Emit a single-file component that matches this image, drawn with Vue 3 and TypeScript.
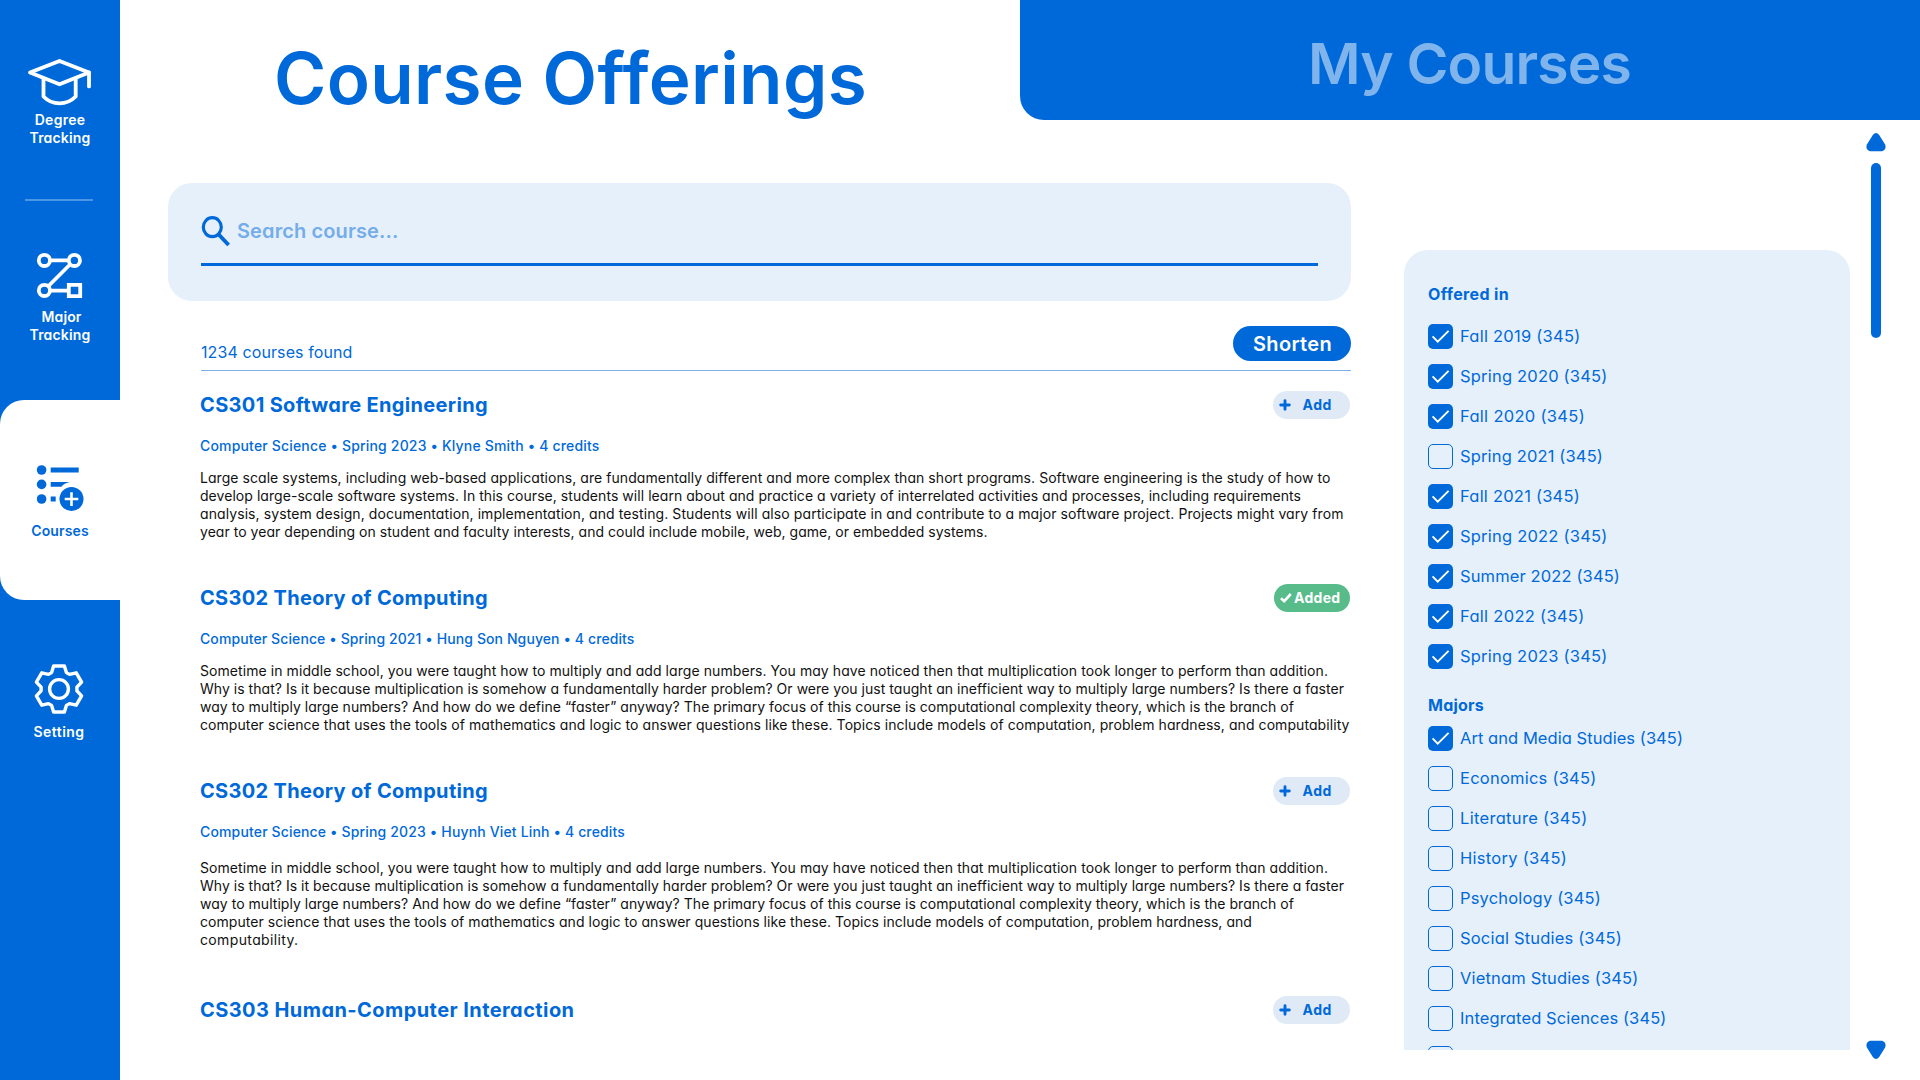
<script setup lang="ts">
import type { Directive } from 'vue'

interface TextLine {
  text: string
  width: number
}

interface Course {
  title: TextLine
  added: boolean
  loose?: boolean
  meta?: TextLine
  lines: TextLine[]
}

interface Option {
  label: string
  width: number
  checked: boolean
}

/* Tracks a single line of text out (or in) so that it spans a given width. */
const vFit: Directive<HTMLElement, number> = {
  mounted(el, { value }) {
    const count = (el.textContent ?? '').trim().length
    const natural = el.getBoundingClientRect().width
    el.style.letterSpacing = `${((value - natural) / count).toFixed(4)}px`
  },
}

const t = (text: string, width: number): TextLine => ({ text, width })

const theoryLines: TextLine[] = [
  t('Sometime in middle school, you were taught how to multiply and add large numbers. You may have noticed then that multiplication took longer to perform than addition.', 1128),
  t('Why is that? Is it because multiplication is somehow a fundamentally harder problem? Or were you just taught an inefficient way to multiply large numbers? Is there a faster', 1144),
  t('way to multiply large numbers? And how do we define “faster” anyway? The primary focus of this course is computational complexity theory, which is the branch of', 1094),
]

const courses: Course[] = [
  {
    title: t('CS301 Software Engineering', 288),
    added: false,
    meta: t('Computer Science • Spring 2023 • Klyne Smith • 4 credits', 399.5),
    lines: [
      t('Large scale systems, including web-based applications, are fundamentally different and more complex than short programs. Software engineering is the study of how to', 1130.5),
      t('develop large-scale software systems. In this course, students will learn about and practice a variety of interrelated activities and processes, including requirements', 1101),
      t('analysis, system design, documentation, implementation, and testing. Students will also participate in and contribute to a major software project. Projects might vary from', 1143.5),
      t('year to year depending on student and faculty interests, and could include mobile, web, game, or embedded systems.', 787.5),
    ],
  },
  {
    title: t('CS302 Theory of Computing', 288),
    added: true,
    meta: t('Computer Science • Spring 2021 • Hung Son Nguyen • 4 credits', 434.5),
    lines: [
      ...theoryLines,
      t('computer science that uses the tools of mathematics and logic to answer questions like these. Topics include models of computation, problem hardness, and computability', 1149.5),
    ],
  },
  {
    title: t('CS302 Theory of Computing', 288),
    added: false,
    loose: true,
    meta: t('Computer Science • Spring 2023 • Huynh Viet Linh • 4 credits', 425),
    lines: [
      ...theoryLines,
      t('computer science that uses the tools of mathematics and logic to answer questions like these. Topics include models of computation, problem hardness, and', 1052),
      t('computability.', 98.5),
    ],
  },
  { title: t('CS303 Human-Computer Interaction', 374.5), added: false, lines: [] },
]

const o = (label: string, width: number, checked: boolean): Option => ({ label, width, checked })

const terms: Option[] = [
  o('Fall 2019 (345)', 120.5, true),
  o('Spring 2020 (345)', 147.5, true),
  o('Fall 2020 (345)', 125, true),
  o('Spring 2021 (345)', 143, false),
  o('Fall 2021 (345)', 120, true),
  o('Spring 2022 (345)', 147.5, true),
  o('Summer 2022 (345)', 160, true),
  o('Fall 2022 (345)', 124.5, true),
  o('Spring 2023 (345)', 147.5, true),
]

const majors: Option[] = [
  o('Art and Media Studies (345)', 223, true),
  o('Economics (345)', 136.5, false),
  o('Literature (345)', 127.5, false),
  o('History (345)', 107, false),
  o('Psychology (345)', 141, false),
  o('Social Studies (345)', 162, false),
  o('Vietnam Studies (345)', 178.5, false),
  o('Integrated Sciences (345)', 206.5, false),
  o('', 0, false),
]

const groups = [
  { name: t('Offered in', 81), options: terms },
  { name: t('Majors', 56), options: majors },
]

/* One gear tooth, repeated every 60 degrees around the centre. */
const tooth: [number, number][] = [[-7.4, -16.4], [-5.4, -23], [5.4, -23], [7.4, -16.4]]
const gear = Array.from({ length: 6 }, (_, i) => {
  const a = (i * Math.PI) / 3
  return tooth
    .map(([x, y]) => `${(x * Math.cos(a) - y * Math.sin(a)).toFixed(2)},${(x * Math.sin(a) + y * Math.cos(a)).toFixed(2)}`)
    .join(' ')
}).join(' ')
</script>

<template>
  <div class="app">
    <nav class="rail">
      <a class="item degree">
        <svg width="66" height="50" viewBox="0 0 66 50" fill="none" stroke="#fff" stroke-width="3.8" stroke-linejoin="round" stroke-linecap="round">
          <path d="M3 15.5 32.5 4 62 15.5 32.5 27.3Z" />
          <path d="M62 15.5V29.4" />
          <path d="M16.5 22V39.5Q23 46.3 32.5 46.3T48.7 39.5V22" stroke-linecap="butt" />
        </svg>
        <span class="label"><span v-fit="50.5">Degree</span></span>
        <span class="label"><span v-fit="61">Tracking</span></span>
      </a>
      <div class="divider"></div>
      <a class="item major">
        <svg width="48" height="48" viewBox="0 0 48 48" fill="none" stroke="#fff" stroke-width="3.8">
          <path d="M14 8.4H33M12 34.5 34.5 12M14 38.6H32" />
          <circle cx="8.4" cy="8.4" r="5.6" />
          <circle cx="38.4" cy="8.4" r="5.6" />
          <circle cx="8.4" cy="38.4" r="5.6" />
          <path d="M32.8 32.8H44.2V44.2H32.8Z" />
        </svg>
        <span class="label nudge"><span v-fit="40">Major</span></span>
        <span class="label"><span v-fit="61">Tracking</span></span>
      </a>
      <a class="item active">
        <svg width="48" height="48" viewBox="0 0 48 48" fill="#0069d9">
          <circle cx="5.6" cy="6" r="4.8" />
          <circle cx="5.6" cy="20.4" r="4.8" />
          <circle cx="5.6" cy="35" r="4.8" />
          <path d="M14.7 3.5h28v4.9h-28zM14.7 18H34q-6 1-8.5 4.8H14.7zM14.7 32.6h5v4.8h-5z" />
          <circle cx="35.5" cy="35" r="12" />
          <path d="M35.5 28.3v13.6M28.7 35h13.6" stroke="#fff" stroke-width="2.6" />
        </svg>
        <span class="label"><span v-fit="57.5">Courses</span></span>
      </a>
      <a class="item setting">
        <svg width="52" height="52" viewBox="-26 -26 52 52" fill="none" stroke="#fff" stroke-width="3.4" stroke-linejoin="round">
          <polygon :points="gear" />
          <circle r="9.4" />
        </svg>
        <span class="label"><span v-fit="51">Setting</span></span>
      </a>
    </nav>

    <main class="main">
      <header class="tabs">
        <h1 class="tab-current"><span v-fit="593">Course Offerings</span></h1>
        <div class="tab-other"><span v-fit="323">My Courses</span></div>
      </header>

      <div class="body">
        <section class="results">
          <div class="search">
            <div class="field">
              <svg width="30" height="32" viewBox="0 0 30 32" fill="none" stroke="#0069d9">
                <ellipse cx="11.3" cy="12.2" rx="9" ry="9.5" stroke-width="3.2" />
                <path d="M17.6 19.4 27.6 30" stroke-width="3.8" />
              </svg>
              <span class="placeholder"><span v-fit="161.5">Search course...</span></span>
            </div>
          </div>

          <div class="summary">
            <span class="count"><span v-fit="151.5">1234 courses found</span></span>
            <button class="shorten"><span v-fit="79">Shorten</span></button>
          </div>

          <article v-for="(course, i) in courses" :key="i" class="course">
            <div class="course-head">
              <h2><span v-fit="course.title.width">{{ course.title.text }}</span></h2>
              <button v-if="course.added" class="chip added">
                <svg width="12" height="10" viewBox="0 0 12 10" fill="none" stroke="#fff" stroke-width="2.6">
                  <path d="M1 5.2 4.2 8.2 10.8 1" />
                </svg>
                <span v-fit="46.5">Added</span>
              </button>
              <button v-else class="chip add">
                <svg width="12" height="12" viewBox="0 0 12 12" stroke="#0069d9" stroke-width="2.9" stroke-linecap="round">
                  <path d="M6 1.7V10.3M1.7 6H10.3" />
                </svg>
                <span v-fit="29.5">Add</span>
              </button>
            </div>
            <template v-if="course.meta">
              <div class="meta"><span v-fit="course.meta.width">{{ course.meta.text }}</span></div>
              <div class="desc" :class="{ loose: course.loose }">
                <div v-for="line in course.lines" :key="line.text"><span v-fit="line.width">{{ line.text }}</span></div>
              </div>
            </template>
          </article>
        </section>

        <aside class="filters">
          <section v-for="group in groups" :key="group.name.text" class="group">
            <h3><span v-fit="group.name.width">{{ group.name.text }}</span></h3>
            <label v-for="option in group.options" :key="option.label" class="option">
              <span class="box" :class="{ checked: option.checked }">
                <svg v-if="option.checked" width="25" height="25" viewBox="0 0 25 25" fill="none" stroke="#fff" stroke-width="1.9">
                  <path d="M4.6 12.4 9.7 17.6 20.6 6.8" />
                </svg>
              </span>
              <span v-if="option.label" v-fit="option.width">{{ option.label }}</span>
            </label>
          </section>
        </aside>

        <div class="scroller">
          <svg width="20" height="19" viewBox="0 0 20 19" fill="#0069d9">
            <path d="M6.8 2Q10-2 13.2 2L19 11.2Q21 16.5 16 18.3H4Q-1 16.5 1 11.2Z" />
          </svg>
          <div class="thumb"></div>
          <svg class="down" width="20" height="19" viewBox="0 0 20 19" fill="#0069d9">
            <path d="M6.8 17Q10 21 13.2 17L19 7.8Q21 2.5 16 .7H4Q-1 2.5 1 7.8Z" />
          </svg>
        </div>
      </div>
    </main>
  </div>
</template>

<style>
body {
  margin: 0;
  background: #fff;
  overflow: hidden;
}
</style>

<style scoped>
.app {
  display: flex;
  width: 1920px;
  height: 1080px;
  overflow: hidden;
  background: #fff;
  color: #0069d9;
  font-family: Inter, 'Liberation Sans', sans-serif;
  font-feature-settings: 'cv11';
  white-space: nowrap;
}

h1,
h2,
h3 {
  margin: 0;
}

svg {
  display: block;
  flex: none;
}

button {
  display: flex;
  align-items: center;
  border: 0;
  padding: 0;
  margin: 0;
  font: inherit;
  color: inherit;
  font-feature-settings: inherit;
}

/* Navigation rail */
.rail {
  width: 120px;
  flex: none;
  display: flex;
  flex-direction: column;
  background: #0069d9;
  color: #fff;
}

.item {
  display: flex;
  flex-direction: column;
  align-items: center;
  box-sizing: border-box;
  font-size: 14px;
  line-height: 18px;
  font-weight: 600;
}

.label {
  display: block;
  height: 18px;
}

.degree {
  height: 199px;
  padding-top: 57px;
}

.degree svg {
  margin-bottom: 4px;
}

.divider {
  width: 68px;
  height: 2px;
  margin-left: 25px;
  background: #4d96e4;
}

.major {
  height: 199px;
  padding-top: 51px;
}

.major svg {
  margin-bottom: 8px;
}

.nudge {
  padding-left: 3px;
}

.active {
  height: 200px;
  padding-top: 64px;
  background: #fff;
  color: #0069d9;
  border-radius: 24px 0 0 24px;
}

.active svg {
  margin-bottom: 10px;
}

.setting {
  padding-top: 63px;
  padding-right: 2px;
}

.setting svg {
  margin-bottom: 8px;
}

/* Header tabs */
.main {
  flex: 1;
  display: flex;
  flex-direction: column;
}

.tabs {
  display: flex;
  height: 120px;
}

.tab-current {
  box-sizing: border-box;
  width: 900px;
  padding-left: 154px;
  font-size: 71px;
  line-height: 157px;
  font-weight: 600;
}

.tab-other {
  box-sizing: border-box;
  width: 900px;
  padding-left: 288px;
  background: #0069d9;
  border-bottom-left-radius: 24px;
  color: #80b4ec;
  font-size: 57px;
  line-height: 128px;
  font-weight: 600;
}

.body {
  display: flex;
  height: 960px;
}

/* Results */
.results {
  width: 1183px;
  margin-left: 48px;
  padding-top: 63px;
}

.search {
  box-sizing: border-box;
  height: 118px;
  padding: 32px 33px 0;
  border-radius: 24px;
  background: #e6f0fb;
}

.field {
  display: flex;
  align-items: center;
  height: 48px;
  border-bottom: 3px solid #0069d9;
}

.field svg {
  align-self: flex-start;
}

.placeholder {
  height: 48px;
  line-height: 32px;
  margin-left: 6px;
  color: #74ade9;
  font-size: 20px;
  font-weight: 600;
}

.summary {
  display: flex;
  justify-content: space-between;
  align-items: flex-start;
  box-sizing: border-box;
  height: 70px;
  margin-left: 33px;
  padding-top: 25px;
  border-bottom: 1px solid #7ab1ec;
}

.count {
  margin-top: 16px;
  font-size: 16px;
  line-height: 20px;
}

.shorten {
  justify-content: center;
  box-sizing: border-box;
  width: 118px;
  height: 35px;
  padding-left: 1px;
  border-radius: 18px;
  background: #0069d9;
  color: #fff;
  font-size: 20px;
  font-weight: 600;
}

.course {
  margin-left: 32px;
  padding-top: 20px;
}

.course + .course {
  padding-top: 43px;
}

.course-head {
  display: flex;
  align-items: center;
  justify-content: space-between;
  height: 28px;
  padding-right: 1px;
}

h2 {
  font-size: 20px;
  line-height: 28px;
  font-weight: 700;
}

.chip {
  box-sizing: border-box;
  height: 28px;
  padding-bottom: 1px;
  border-radius: 14px;
  font-size: 14px;
  font-weight: 700;
}

.add {
  width: 77px;
  padding-left: 6px;
  gap: 11.5px;
  background: #e0eaf7;
}

.added {
  width: 76px;
  padding-left: 6px;
  gap: 2px;
  background: #57bb8a;
  color: #fff;
}

.meta {
  margin-top: 18px;
  font-size: 14px;
  line-height: 18px;
  font-weight: 500;
}

.desc {
  margin-top: 14px;
  color: #111;
  font-size: 14px;
  line-height: 18px;
  font-weight: 400;
}

.loose {
  padding: 4px 0;
}

/* Filters */
.filters {
  box-sizing: border-box;
  width: 446px;
  height: 800px;
  margin: 130px 0 0 53px;
  padding: 34px 24px 0;
  overflow: hidden;
  border-radius: 24px 24px 0 0;
  background: #e6f0fb;
  font-size: 16.5px;
}

h3 {
  margin-bottom: 20px;
  font-size: 16px;
  line-height: 20px;
  font-weight: 700;
}

.option {
  display: flex;
  align-items: center;
  gap: 7px;
  height: 25px;
  margin-bottom: 15px;
  line-height: 25px;
}

.group + .group {
  padding-top: 11px;
}

.group + .group h3 {
  margin-bottom: 11px;
}

.box {
  box-sizing: border-box;
  flex: none;
  width: 25px;
  height: 25px;
  border: 1px solid #0069d9;
  border-radius: 5px;
}

.box.checked {
  border: 0;
  background: #0069d9;
}

/* Scroll track */
.scroller {
  display: flex;
  flex-direction: column;
  align-items: center;
  width: 20px;
  height: 926px;
  margin: 13px 0 0 16px;
}

.scroller svg {
  margin-right: 1px;
}

.thumb {
  width: 10px;
  height: 175px;
  margin-top: 11px;
  border-radius: 5px;
  background: #0069d9;
}

.down {
  margin-top: auto;
}
</style>
